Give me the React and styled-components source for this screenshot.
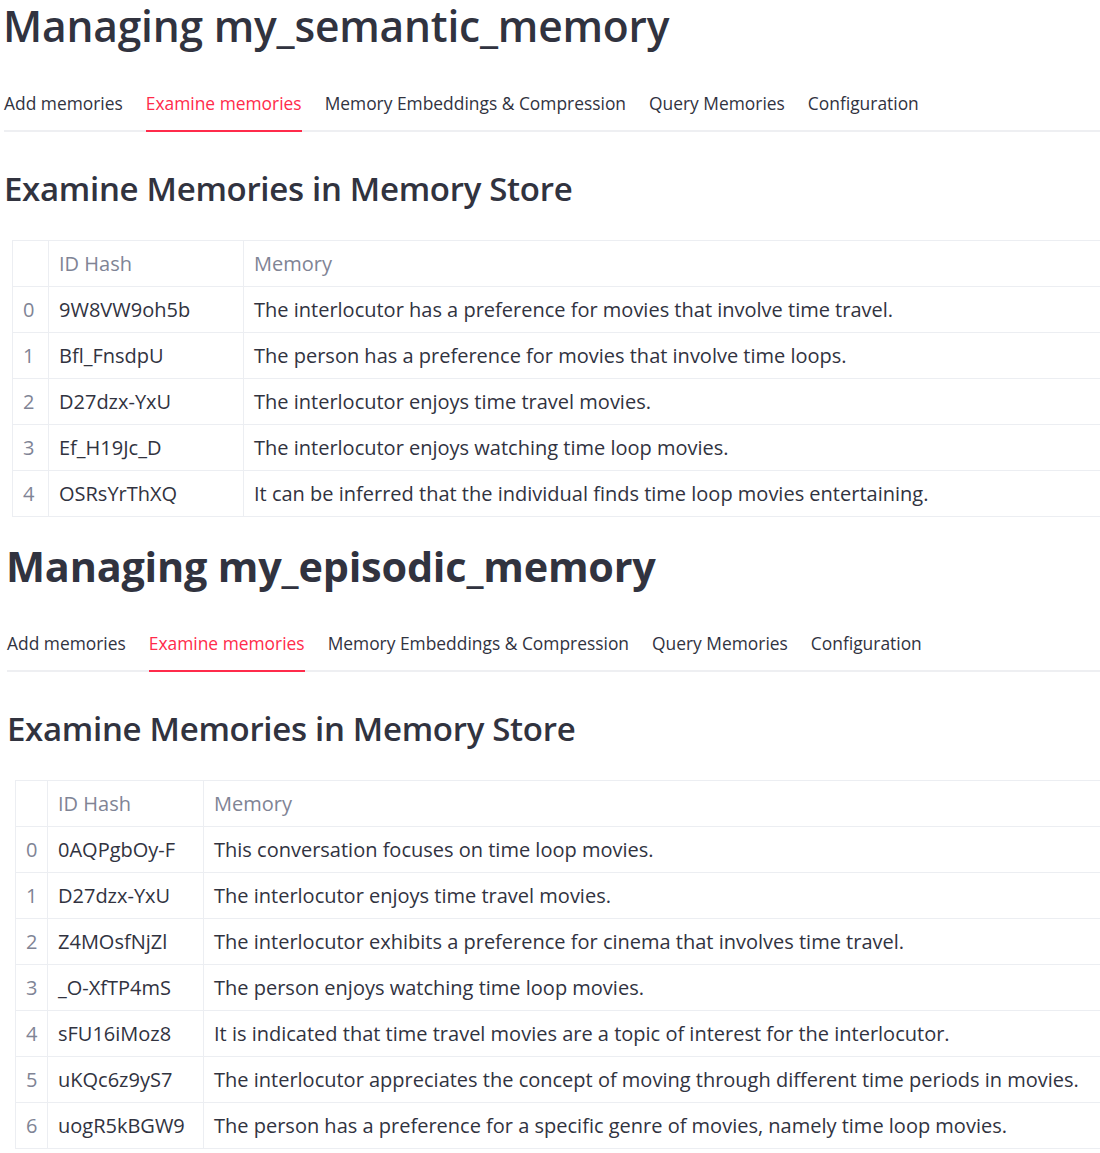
import React from "react";
import styled, { createGlobalStyle } from "styled-components";

const GlobalStyle = createGlobalStyle`
  html, body {
    margin: 0;
    padding: 0;
    background: #ffffff;
    overflow: hidden;
  }
  body {
    font-family: "Open Sans", "Noto Sans", sans-serif;
    color: #31333f;
  }
`;

const Page = styled.div`
  display: flex;
  flex-direction: column;
  gap: 23px;
  width: 1100px;
`;

const Section = styled.section`
  display: flex;
  flex-direction: column;
  padding-left: ${(p) => p.$shift}px;
`;

const Title = styled.h1`
  margin: 0 0 0 -1px;
  font-size: ${(p) => p.$size}px;
  line-height: 52px;
  font-weight: ${(p) => p.$weight};
  letter-spacing: -0.2px;
  color: #31333f;
  white-space: nowrap;
`;

const TabList = styled.div`
  display: flex;
  gap: 23px;
  margin-top: 39px;
  border-bottom: 2px solid #eeeff2;
`;

const Tab = styled.div`
  font-size: 17.4px;
  line-height: 24px;
  padding-bottom: 15px;
  margin-bottom: -2px;
  color: ${(p) => (p.$active ? "#ff2b4b" : "#31333f")};
  border-bottom: 2px solid ${(p) => (p.$active ? "#ff2b4b" : "transparent")};
  white-space: nowrap;
`;

const Heading = styled.h2`
  margin: 35px 0 0 0;
  font-size: 33px;
  line-height: 44px;
  font-weight: 600;
  letter-spacing: -0.3px;
  color: #31333f;
  white-space: nowrap;
`;

const TableWrap = styled.div`
  margin-top: 29px;
  padding-left: 8px;
`;

const Table = styled.table`
  border-collapse: collapse;
  width: 1120px;
  table-layout: fixed;
  font-size: 20px;
`;

const Th = styled.th`
  text-align: left;
  font-weight: 400;
  color: #808495;
  height: 46px;
  padding: 0 10px;
  border: 1px solid #eceef2;
  box-sizing: border-box;
  white-space: nowrap;
`;

const Td = styled.td`
  height: 46px;
  padding: 0 10px;
  border: 1px solid #eceef2;
  box-sizing: border-box;
  color: ${(p) => (p.$index ? "#808495" : "#31333f")};
  white-space: nowrap;
`;

const tabs = [
  "Add memories",
  "Examine memories",
  "Memory Embeddings & Compression",
  "Query Memories",
  "Configuration",
];

const sections = [
  {
    name: "my_semantic_memory",
    shift: 4,
    weight: 600,
    size: 42.5,
    idxW: 36,
    idW: 195,
    rows: [
      ["9W8VW9oh5b", "The interlocutor has a preference for movies that involve time travel."],
      ["Bfl_FnsdpU", "The person has a preference for movies that involve time loops."],
      ["D27dzx-YxU", "The interlocutor enjoys time travel movies."],
      ["Ef_H19Jc_D", "The interlocutor enjoys watching time loop movies."],
      ["OSRsYrThXQ", "It can be inferred that the individual finds time loop movies entertaining."],
    ],
  },
  {
    name: "my_episodic_memory",
    shift: 7,
    weight: 700,
    size: 41.4,
    idxW: 32,
    idW: 156,
    rows: [
      ["0AQPgbOy-F", "This conversation focuses on time loop movies."],
      ["D27dzx-YxU", "The interlocutor enjoys time travel movies."],
      ["Z4MOsfNjZl", "The interlocutor exhibits a preference for cinema that involves time travel."],
      ["_O-XfTP4mS", "The person enjoys watching time loop movies."],
      ["sFU16iMoz8", "It is indicated that time travel movies are a topic of interest for the interlocutor."],
      ["uKQc6z9yS7", "The interlocutor appreciates the concept of moving through different time periods in movies."],
      ["uogR5kBGW9", "The person has a preference for a specific genre of movies, namely time loop movies."],
    ],
  },
];

function MemorySection({ s }) {
  return (
    <Section $shift={s.shift}>
      <Title $weight={s.weight} $size={s.size}>
        Managing {s.name}
      </Title>
      <TabList>
        {tabs.map((t, i) => (
          <Tab key={t} $active={i === 1}>
            {t}
          </Tab>
        ))}
      </TabList>
      <Heading>Examine Memories in Memory Store</Heading>
      <TableWrap>
        <Table>
          <colgroup>
            <col style={{ width: s.idxW }} />
            <col style={{ width: s.idW }} />
            <col />
          </colgroup>
          <thead>
            <tr>
              <Th />
              <Th>ID Hash</Th>
              <Th>Memory</Th>
            </tr>
          </thead>
          <tbody>
            {s.rows.map((r, i) => (
              <tr key={r[0] + i}>
                <Td $index>{i}</Td>
                <Td>{r[0]}</Td>
                <Td>{r[1]}</Td>
              </tr>
            ))}
          </tbody>
        </Table>
      </TableWrap>
    </Section>
  );
}

export default function App() {
  return (
    <Page>
      <GlobalStyle />
      {sections.map((s) => (
        <MemorySection key={s.name} s={s} />
      ))}
    </Page>
  );
}
